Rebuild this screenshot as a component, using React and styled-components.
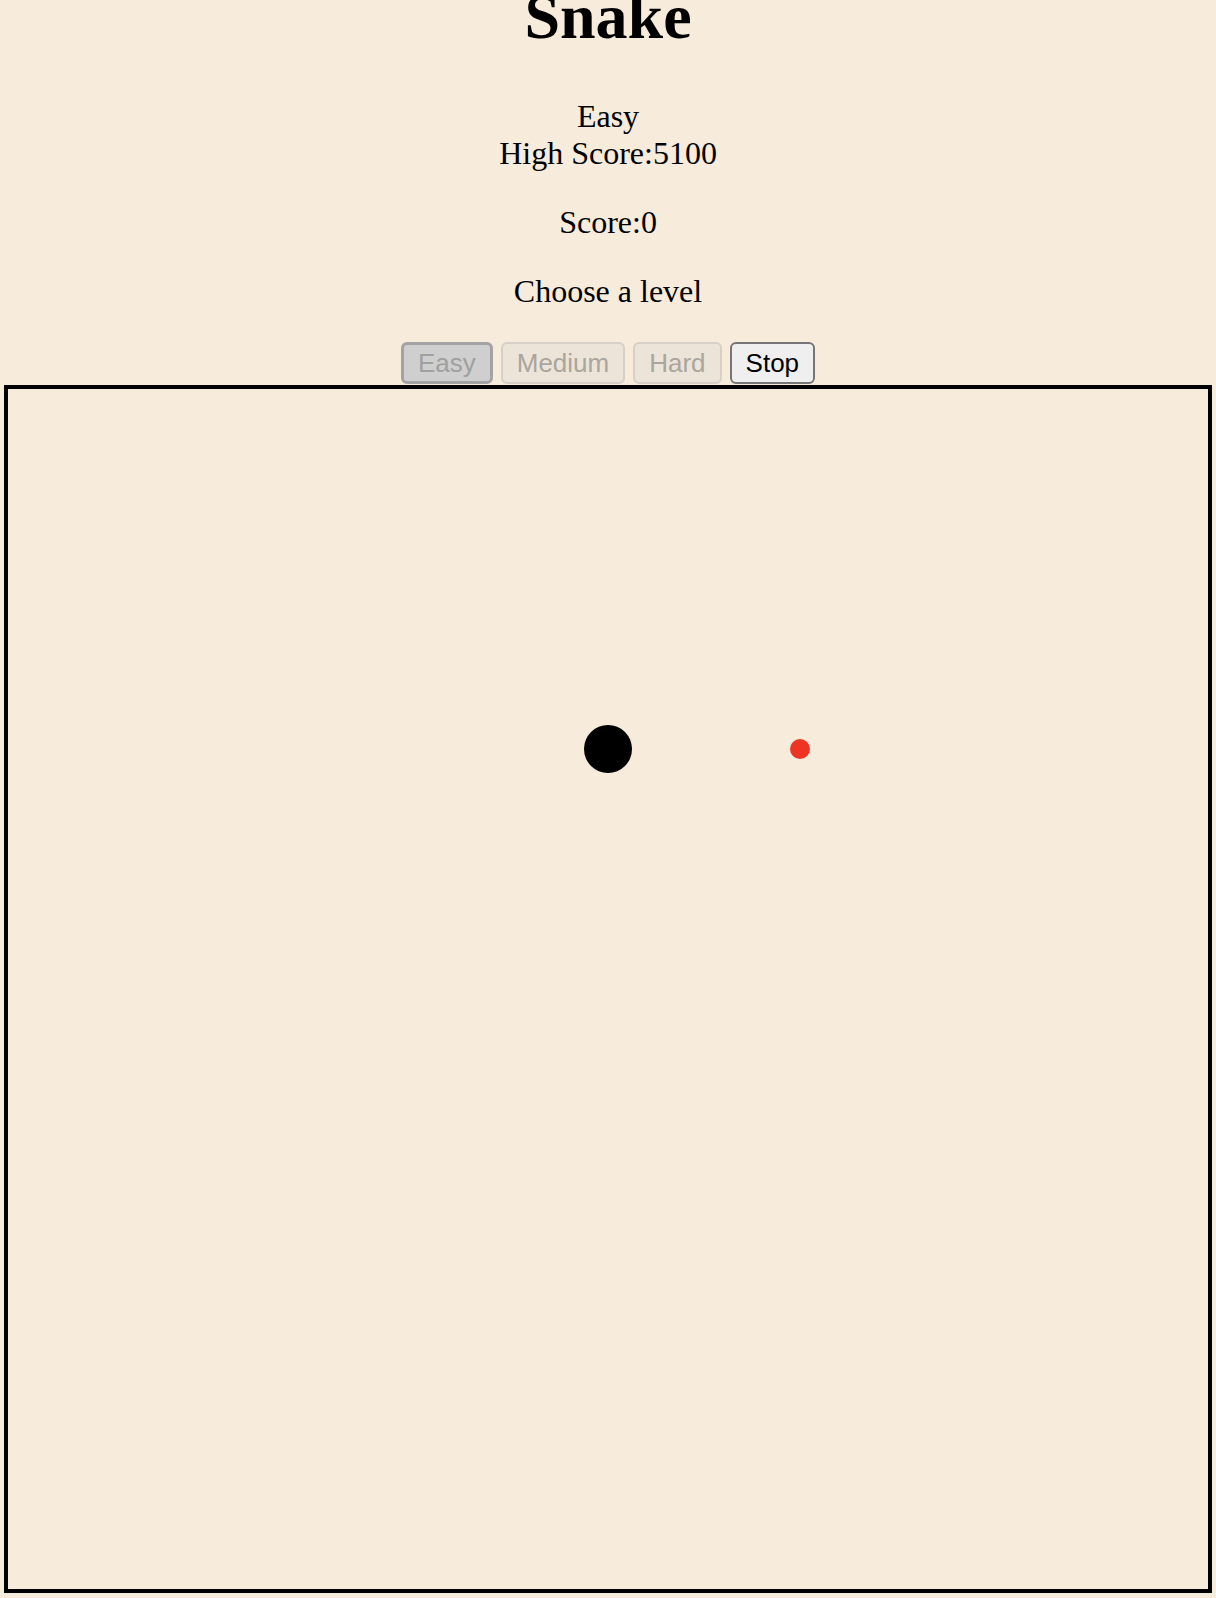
import styled, { createGlobalStyle } from 'styled-components'

const CELL = 48
const snake = [{ x: 12, y: 7 }]
const food = { x: 16, y: 7 }
const levels = ['Easy', 'Medium', 'Hard']

const GlobalStyle = createGlobalStyle`
  html, body {
    margin: 0;
    background: #f7ecdb;
  }
  body {
    font-family: "Liberation Serif", "Times New Roman", serif;
    color: #000;
  }
`

const App = () => {
  const level = 'Easy'
  return (
    <Root>
      <GlobalStyle />
      <Title>Snake</Title>
      <Info>
        <div>{level}</div>
        <div>High Score:5100</div>
      </Info>
      <Line>Score:0</Line>
      <Line>Choose a level</Line>
      <Buttons>
        {levels.map((l) => (
          <LevelBtn key={l} $active={l === level} disabled>
            {l}
          </LevelBtn>
        ))}
        <StopBtn>Stop</StopBtn>
      </Buttons>
      <Board>
        {snake.map((s, i) => (
          <Segment
            key={i}
            style={{ left: s.x * CELL, top: s.y * CELL }}
          />
        ))}
        <Food style={{ left: food.x * CELL + 14, top: food.y * CELL + 14 }} />
      </Board>
    </Root>
  )
}

const Root = styled.div`
  display: flex;
  flex-direction: column;
  align-items: center;
  text-align: center;
  overflow: hidden;
`
const Title = styled.h1`
  font-size: 64px;
  font-weight: bold;
  line-height: 74px;
  margin: -20px 0 44px;
`
const Info = styled.div`
  font-size: 32px;
  line-height: 37px;
`
const Line = styled.p`
  font-size: 32px;
  line-height: 37px;
  margin: 32px 0 0;
`
const Buttons = styled.div`
  display: flex;
  gap: 8px;
  margin-top: 32px;
  margin-bottom: 1px;
`
const BaseBtn = styled.button`
  height: 42px;
  padding: 0 14px;
  font-family: "Liberation Sans", Arial, sans-serif;
  font-size: 26px;
  border-radius: 6px;
`
const LevelBtn = styled(BaseBtn)`
  background: ${({ $active }) => ($active ? '#cfcfcf' : '#ece4d9')};
  border: ${({ $active }) => ($active ? '3px solid #a3a3a3' : '2px solid #d6d0c8')};
  color: ${({ $active }) => ($active ? '#a0a0a0' : '#aaa59d')};
`
const StopBtn = styled(BaseBtn)`
  background: #efefef;
  border: 2px solid #767676;
  color: #000;
`
const Board = styled.div`
  position: relative;
  flex: none;
  width: 1200px;
  height: 1200px;
  border: 4px solid #000;
`
const Segment = styled.div`
  position: absolute;
  width: ${CELL}px;
  height: ${CELL}px;
  border-radius: 50%;
  background: #000;
`
const Food = styled.div`
  position: absolute;
  width: 20px;
  height: 20px;
  border-radius: 50%;
  background: #ee3524;
`

export default App
